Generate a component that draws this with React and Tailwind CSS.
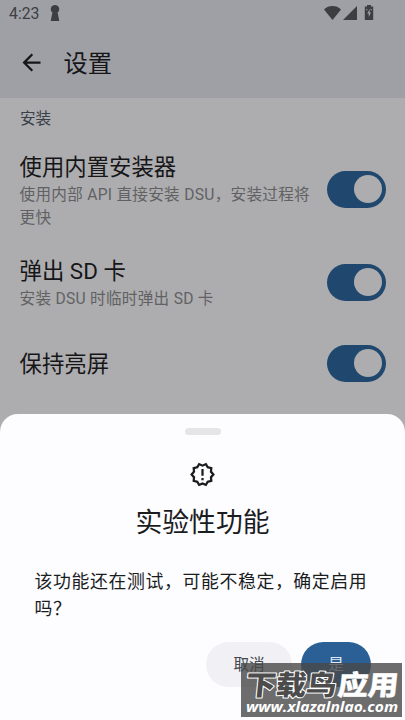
import { useState } from "react";
import { MdArrowBack, MdOutlineNewReleases } from "react-icons/md";

const StatusBar = () => (
  <div className="flex h-[26px] items-center justify-between pl-[9px] pr-[31px] text-[#3d3e42]">
    <div className="flex items-center">
      <span className="w-[31px] pt-px text-[15.8px] leading-none">4:23</span>
      <svg className="ml-[10px] h-4 w-[10px]" viewBox="0 0 10 16" fill="currentColor">
        <path d="M5 0a4.2 4.2 0 0 1 2.6 7.5L9.3 16H.7l1.7-8.5A4.2 4.2 0 0 1 5 0z" />
      </svg>
    </div>
    <div className="flex items-center pb-px">
      <svg className="h-[14px] w-[17px]" viewBox="0 0 17 14" fill="currentColor">
        <path d="M8.5 14L0 3.4C2.2 1.2 5.2 0 8.5 0s6.3 1.2 8.5 3.4z" />
      </svg>
      <svg className="ml-[2px] h-[14px] w-[14px]" viewBox="0 0 14 14" fill="currentColor">
        <path d="M14 0v14H0z" />
      </svg>
      <svg className="ml-[7px] h-[15px] w-[10px]" viewBox="0 0 10 15">
        <path d="M3 0h4v1.5h2.2V15H.8V1.5H3z" fill="currentColor" />
        <path d="M5.8 4L3.2 8.5h1.500V12l2.300-4.600H5.500z" fill="#9fa0a6" />
        <path d="M2 4h1.5v1.2H2zM6.500 4H8v1.200H6.500z" fill="#85868b" />
      </svg>
    </div>
  </div>
);

const Toggle = ({ checked, onChange }) => (
  <button
    type="button"
    role="switch"
    aria-checked={checked}
    onClick={onChange}
    className={`flex h-[37px] w-[59px] shrink-0 items-center rounded-full bg-[#20476e] px-1 ${checked ? "justify-end" : "justify-start"}`}
  >
    <span className="h-[28px] w-[28px] rounded-full bg-[#adadaf]" />
  </button>
);

const SettingRow = ({ title, description, checked, onChange, className }) => (
  <div className={`flex items-center justify-between pl-[19.5px] pr-[19px] ${className}`}>
    <div className="w-[294px] pt-[2px]">
      <div className="text-[22.4px] leading-[30px] text-[#161618]">{title}</div>
      {description && (
        <div className="mt-[2px] -mb-px text-[15.6px] leading-[22.5px] tracking-[0.29px] text-[#616164]">
          {description}
        </div>
      )}
    </div>
    <Toggle checked={checked} onChange={onChange} />
  </div>
);

const Watermark = () => (
  <div className="absolute top-[663px] left-[241px] h-[54px] w-[161px] overflow-hidden bg-[#484848]/80">
    <svg className="h-[54px] w-[161px]" viewBox="0 0 161 54">
      <g
        fontFamily="Noto Sans CJK SC, sans-serif"
        fontWeight="900"
        fontSize="27.5"
        stroke="#fff"
        strokeLinejoin="round"
        paintOrder="stroke"
        transform="skewX(-6)"
      >
        <text x="7" y="32" textLength="91" lengthAdjust="spacingAndGlyphs" fill="#4c4c4c" strokeWidth="2">
          下载鸟
        </text>
        <text x="99" y="32" textLength="61" lengthAdjust="spacingAndGlyphs" fill="#fff" strokeWidth="0.3">
          应用
        </text>
      </g>
      <text
        x="5"
        y="49"
        textLength="152"
        lengthAdjust="spacingAndGlyphs"
        fill="#fff"
        fontFamily="Open Sans, sans-serif"
        fontWeight="700"
        fontStyle="italic"
        fontSize="14.5"
      >
        www.xlazalnlao.com
      </text>
    </svg>
  </div>
);

const App = () => {
  const [settings, setSettings] = useState({
    installer: true,
    eject: true,
    screen: true,
  });

  const toggle = (name) => {
    setSettings({ ...settings, [name]: !settings[name] });
  };

  return (
    <div className="relative flex h-[720px] w-[405px] flex-col overflow-hidden bg-[#adadaf] font-['Roboto','Noto_Sans_CJK_SC',sans-serif]">
      <header className="h-[98px] bg-[#9fa0a6]">
        <StatusBar />
        <div className="flex h-[72px] items-center pl-[18px]">
          <MdArrowBack className="size-[27px] text-[#161618]" />
          <h1 className="ml-[18.5px] pt-[5px] text-[24.3px] leading-none text-[#161618]">设置</h1>
        </div>
      </header>

      <main className="h-[316px]">
        <div className="h-[42px] pt-[10px] pl-[20px] text-[15.6px] leading-[22px] text-[#3a4049]">安装</div>
        <SettingRow
          title="使用内置安装器"
          description="使用内部 API 直接安装 DSU，安装过程将更快"
          checked={settings.installer}
          onChange={() => toggle("installer")}
          className="h-[98px]"
        />
        <SettingRow
          title="弹出 SD 卡"
          description="安装 DSU 时临时弹出 SD 卡"
          checked={settings.eject}
          onChange={() => toggle("eject")}
          className="h-[88px]"
        />
        <SettingRow
          title="保持亮屏"
          checked={settings.screen}
          onChange={() => toggle("screen")}
          className="h-[74px]"
        />
      </main>

      <section className="flex h-[306px] flex-col items-center rounded-t-[18px] bg-[#fdfcff] text-[#1a1c1e]">
        <div className="mt-[14px] h-[7px] w-9 rounded-full bg-[#e5e5e7]" />
        <MdOutlineNewReleases className="mt-[26px] size-[27px]" />
        <h2 className="mt-[17px] text-[26.8px] leading-[36px]">实验性功能</h2>
        <p className="mt-[27px] w-[338px] pl-px text-[17.9px] leading-[27px] tracking-[0.6px]">
          该功能还在测试，可能不稳定，确定启用吗？
        </p>
        <div className="mt-[20px] flex w-full justify-end gap-[9px] pr-[34px] text-[15.6px]">
          <button type="button" className="h-[45px] w-[86px] rounded-full bg-[#f1f0f4] pt-[2px] text-[#43474e]">
            取消
          </button>
          <button type="button" className="h-[45px] w-[70px] rounded-full bg-[#2b6096] pt-[2px] text-[#dfe9f5]">
            是
          </button>
        </div>
      </section>

      <Watermark />
    </div>
  );
};

export default App;
